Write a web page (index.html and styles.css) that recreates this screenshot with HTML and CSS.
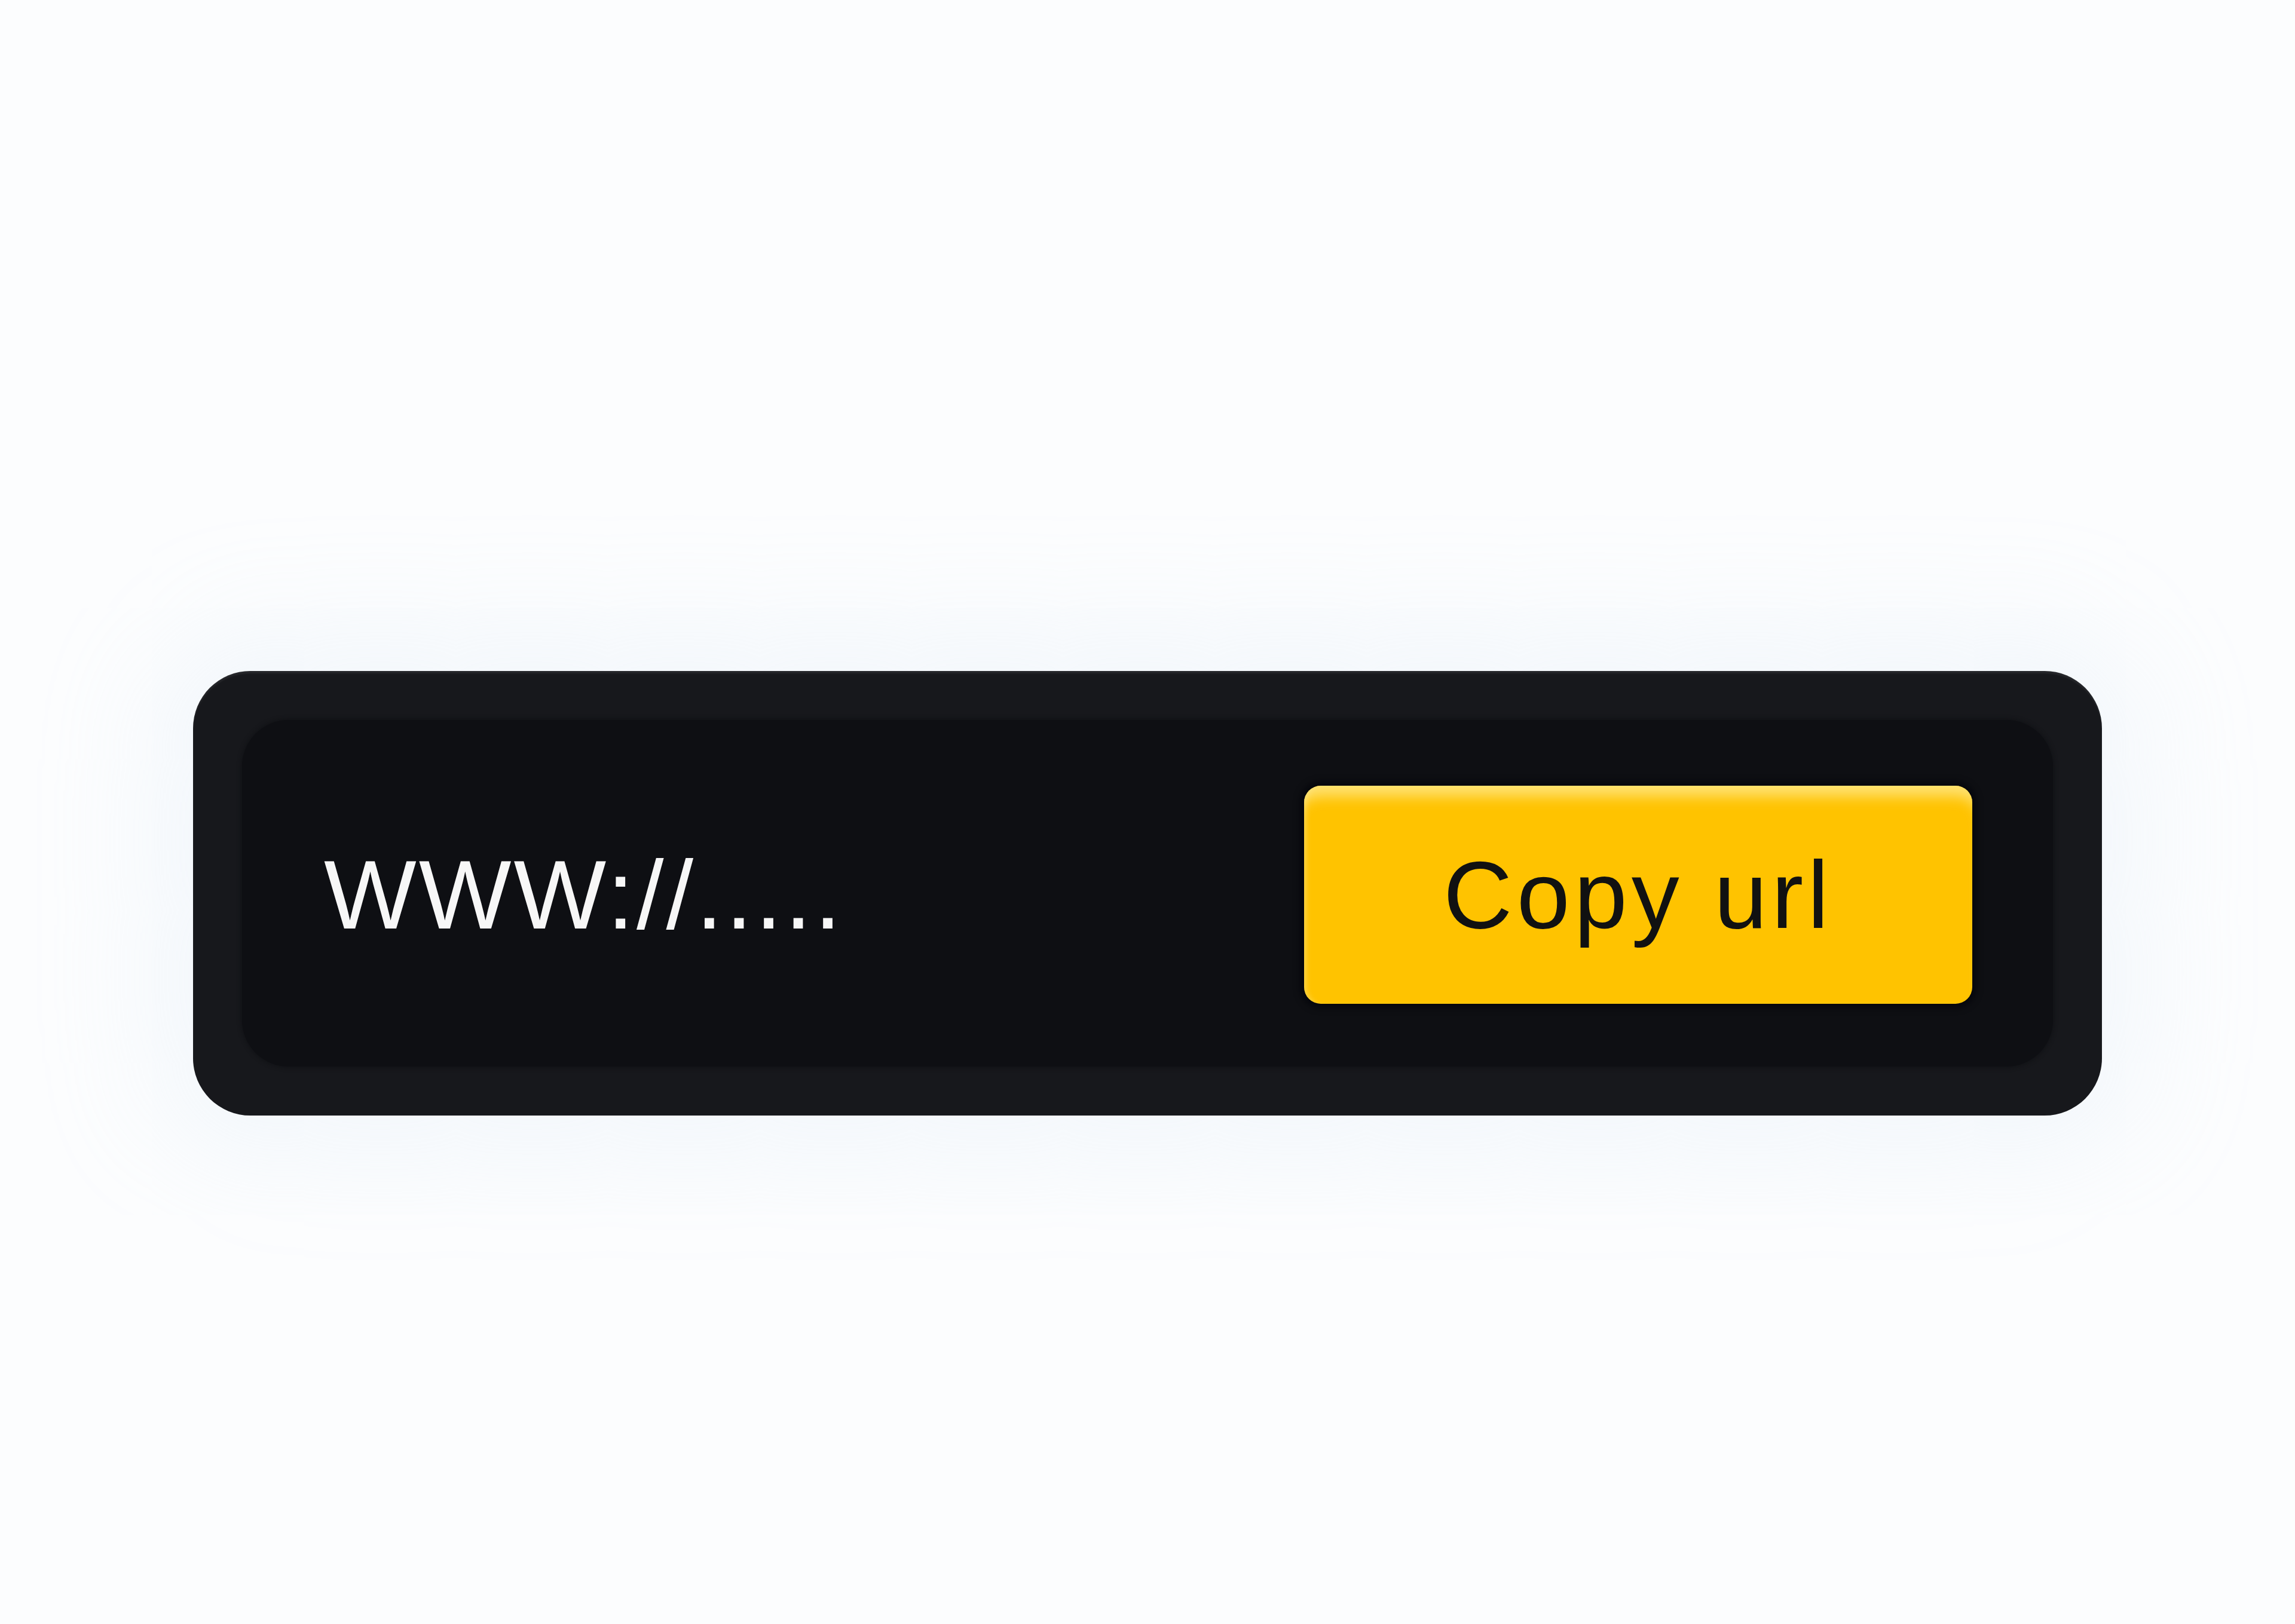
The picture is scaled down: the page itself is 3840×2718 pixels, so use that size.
FILE: index.html
```html
<!DOCTYPE html>
<html lang="en">
<head>
<meta charset="utf-8">
<title>Copy url</title>
<link rel="stylesheet" href="styles.css">
</head>
<body>
  <div class="stage">
    <div class="frame">
      <div class="field">
        <span class="url">WWW://.....</span>
        <button class="copy" type="button">Copy url</button>
      </div>
    </div>
  </div>
</body>
</html>
```

FILE: styles.css
```css
html, body {
  margin: 0;
  padding: 0;
}
body {
  width: 3840px;
  height: 2718px;
  background: #fcfdfe;
  overflow: hidden;
  font-family: "Liberation Sans", Arial, sans-serif;
}
.stage {
  display: flex;
  justify-content: center;
  padding-top: 1123px;
}
.frame {
  width: 3194px;
  box-sizing: border-box;
  padding: 82px;
  border-radius: 96px;
  background: #17181c;
  box-shadow: inset 0 4px 3px rgba(255, 255, 255, 0.07),
              0 0 200px 60px rgba(205, 222, 240, 0.22);
}
.field {
  display: flex;
  align-items: center;
  justify-content: space-between;
  padding: 110px 135px 105px 137px;
  border-radius: 78px;
  background: #0e0f13;
  box-shadow: 0 0 6px 2px rgba(14, 15, 19, 0.6);
}
.url {
  color: #f7f7f7;
  font-size: 164px;
  letter-spacing: 4px;
  line-height: 1;
}
.copy {
  width: 1118px;
  height: 365px;
  border: none;
  border-radius: 28px;
  background: #ffc300;
  color: #111111;
  font-family: "Liberation Sans", Arial, sans-serif;
  font-size: 160px;
  letter-spacing: 7px;
  padding: 0;
  box-shadow: inset 0 34px 22px -16px rgba(255, 232, 140, 0.8),
              inset 8px 0 8px -4px rgba(255, 222, 110, 0.6),
              0 0 12px 6px rgba(2, 3, 8, 0.7);
}
```
